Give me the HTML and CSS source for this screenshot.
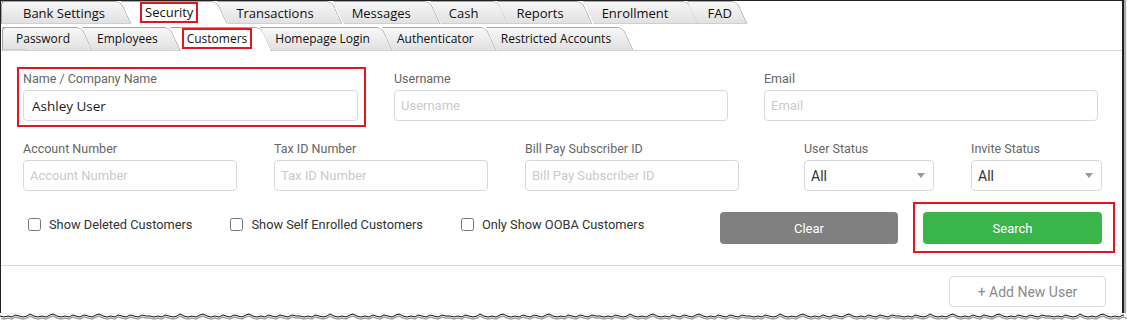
FILE: index.html
```html
<!DOCTYPE html>
<html lang="en">
<head>
    <meta charset="UTF-8">
    <meta name="viewport" content="width=device-width, initial-scale=1.0">
    <title>Security - Customers</title>
    <link rel="stylesheet" href="styles.css">
</head>
<body>
    <div class="frame">
        <!-- Main tabs -->
        <nav class="tabs tabs-main">
            <div class="tab">Bank Settings</div>
            <div class="tab active"><span class="hl">Security</span></div>
            <div class="tab">Transactions</div>
            <div class="tab">Messages</div>
            <div class="tab">Cash</div>
            <div class="tab">Reports</div>
            <div class="tab">Enrollment</div>
            <div class="tab tab-last">FAD</div>
        </nav>

        <!-- Security sub tabs -->
        <nav class="tabs tabs-sub">
            <div class="tab">Password</div>
            <div class="tab">Employees</div>
            <div class="tab active"><span class="hl">Customers</span></div>
            <div class="tab">Homepage Login</div>
            <div class="tab">Authenticator</div>
            <div class="tab">Restricted Accounts</div>
        </nav>

        <form class="search-form">
            <div class="row row-top">
                <div class="field field-hl">
                    <label class="field-label">Name / Company Name</label>
                    <input type="text" class="input input-filled" value="Ashley User">
                </div>
                <div class="field">
                    <label class="field-label">Username</label>
                    <input type="text" class="input" placeholder="Username">
                </div>
                <div class="field">
                    <label class="field-label">Email</label>
                    <input type="text" class="input" placeholder="Email">
                </div>
            </div>

            <div class="row row-mid">
                <div class="field">
                    <label class="field-label">Account Number</label>
                    <input type="text" class="input" placeholder="Account Number">
                </div>
                <div class="field">
                    <label class="field-label">Tax ID Number</label>
                    <input type="text" class="input" placeholder="Tax ID Number">
                </div>
                <div class="field">
                    <label class="field-label">Bill Pay Subscriber ID</label>
                    <input type="text" class="input" placeholder="Bill Pay Subscriber ID">
                </div>
                <div class="field field-status">
                    <label class="field-label">User Status</label>
                    <div class="select-wrap">
                        <select class="select"><option>All</option></select>
                        <span class="caret"></span>
                    </div>
                </div>
                <div class="field">
                    <label class="field-label">Invite Status</label>
                    <div class="select-wrap">
                        <select class="select"><option>All</option></select>
                        <span class="caret"></span>
                    </div>
                </div>
            </div>

            <div class="row row-actions">
                <div class="checks">
                    <label class="check"><input type="checkbox"><span>Show Deleted Customers</span></label>
                    <label class="check"><input type="checkbox"><span>Show Self Enrolled Customers</span></label>
                    <label class="check"><input type="checkbox"><span>Only Show OOBA Customers</span></label>
                </div>
                <div class="buttons">
                    <button type="button" class="btn btn-clear">Clear</button>
                    <div class="btn-hl">
                        <button type="button" class="btn btn-search">Search</button>
                    </div>
                </div>
            </div>
        </form>

        <div class="footer">
            <button type="button" class="btn-add">+ Add New User</button>
        </div>
    </div>

    <!-- torn paper edge -->
    <svg class="tear" width="1127" height="10" viewBox="0 0 1127 10">
        <defs>
            <pattern id="tearShadow" width="150" height="10" patternUnits="userSpaceOnUse">
                <path d="M0 6 L4 7 L8 6 L12 7 L15 5 L19 6 L23 7 L27 6 L30 4 L34 6 L38 7 L42 6 L46 7 L50 5 L53 4 L57 6 L61 7 L65 6 L69 7 L73 5 L76 6 L80 7 L84 5 L88 6 L92 7 L96 5 L99 4 L103 6 L107 7 L111 6 L115 7 L118 5 L122 6 L126 7 L130 5 L134 6 L138 7 L142 5 L146 6 L150 6" fill="none" stroke="#a0a0a0" stroke-width="1.5"/>
            </pattern>
            <pattern id="tearLine" width="150" height="10" patternUnits="userSpaceOnUse">
                <path d="M0 4 L4 5 L8 4 L12 5 L15 3 L19 4 L23 5 L27 4 L30 2 L34 4 L38 5 L42 4 L46 5 L50 3 L53 2 L57 4 L61 5 L65 4 L69 5 L73 3 L76 4 L80 5 L84 3 L88 4 L92 5 L96 3 L99 2 L103 4 L107 5 L111 4 L115 5 L118 3 L122 4 L126 5 L130 3 L134 4 L138 5 L142 3 L146 4 L150 4" fill="none" stroke="#111" stroke-width="1"/>
            </pattern>
        </defs>
        <rect x="1" y="0" width="1126" height="10" fill="url(#tearShadow)"/>
        <rect x="0" y="0" width="1124" height="10" fill="url(#tearLine)"/>
    </svg>
</body>
</html>
```

FILE: styles.css
```css
* {
    margin: 0;
    padding: 0;
    box-sizing: border-box;
}

body {
    font-family: Roboto, Arial, sans-serif;
    background: #fff;
    width: 1127px;
    height: 322px;
    overflow: hidden;
}

/* Window frame */
.frame {
    width: 1124px;
    height: 313px;
    border-top: 1px solid #222;
    border-left: 1px solid #222;
    border-right: 2px solid #222;
    box-shadow: 2px 0 1px #aaa;
    overflow: hidden;
    background: #fff;
}

/* Tabs */
.tabs {
    display: flex;
    height: 23px;
}

.tab {
    position: relative;
    z-index: 0;
    display: flex;
    align-items: center;
    justify-content: center;
    padding: 0 20px;
    font-family: "Open Sans", sans-serif;
    color: #111;
    white-space: nowrap;
}

.tab::before {
    content: '';
    position: absolute;
    top: 0;
    left: 0;
    right: 0;
    bottom: 0;
    z-index: -1;
    background: linear-gradient(#f7f7f7, #e1e1e1);
    border: 1px solid #a4a4a4;
    border-left: none;
    border-bottom-color: #cfcfcf;
    border-radius: 0 6px 0 0;
    transform: skewX(25deg);
    transform-origin: top left;
}

.tab:first-child::after {
    content: '';
    position: absolute;
    top: 0;
    left: 0;
    bottom: 0;
    width: 24px;
    z-index: -1;
    background: linear-gradient(#f7f7f7, #e1e1e1);
    border: 1px solid #a4a4a4;
    border-right: none;
    border-bottom-color: #cfcfcf;
    border-radius: 4px 0 0 0;
}

.tab.active::before {
    background: #fff;
    border-bottom: none;
}

.tabs-main .tab {
    font-size: 13px;
    padding: 0 19px;
}

.tabs-main .tab:first-child {
    padding: 0 16px 0 22px;
}

.tabs-main .tab-last {
    padding: 0 6px 0 20px;
}

.tabs-sub {
    margin-top: 3px;
    border-bottom: 1px solid #d4d4d4;
    height: 24px;
}

.tabs-sub .tab {
    font-size: 12px;
    padding: 0 12px 0 15px;
    height: 23px;
}

.tabs-sub .tab:first-child {
    margin-left: 1px;
    padding-left: 14px;
}

.tabs-sub .tab.active {
    padding: 0 8px 0 12px;
}

.tabs-sub .tab::before {
    border-bottom: none;
}

.tabs-sub .tab.active::before {
    bottom: -1px;
}

.hl {
    border: 2px solid #e8141b;
    padding: 0 3px;
    line-height: 17px;
}

/* Search form */
.search-form {
    padding: 20px 20px 21px 22px;
}

.row {
    display: grid;
}

.row-top {
    grid-template-columns: 335px 334px 334px;
    column-gap: 36px;
}

.row-mid {
    grid-template-columns: 214px 214px 214px 158px 131px;
    column-gap: 37px;
    margin-top: 20px;
}

.field {
    display: flex;
    flex-direction: column;
    gap: 4px;
    position: relative;
}

.field-hl::after {
    content: '';
    position: absolute;
    top: -4px;
    left: -6px;
    right: -8px;
    bottom: -6px;
    border: 2px solid #e8141b;
    pointer-events: none;
}

.field-status {
    padding-left: 28px;
}

.field-label {
    font-size: 12.5px;
    line-height: 15px;
    color: #666;
}

.input {
    height: 31px;
    border: 1px solid #d9d9d9;
    border-radius: 4px;
    padding: 0 6px;
    font-family: Roboto, Arial, sans-serif;
    font-size: 13px;
    color: #222;
    outline: none;
}

.input::placeholder {
    color: #cbcbcb;
}

.input-filled {
    font-family: "Open Sans", sans-serif;
    font-size: 13.5px;
    padding-left: 8px;
    color: #1a1a1a;
}

.select-wrap {
    position: relative;
}

.select {
    appearance: none;
    width: 100%;
    height: 31px;
    border: 1px solid #d9d9d9;
    border-radius: 4px;
    padding: 0 6px;
    background: #fff;
    font-family: Roboto, Arial, sans-serif;
    font-size: 14px;
    color: #333;
    outline: none;
}

.caret {
    position: absolute;
    right: 9px;
    top: 13px;
    border-left: 4.5px solid transparent;
    border-right: 4.5px solid transparent;
    border-top: 5px solid #999;
}

/* Checkboxes and buttons */
.row-actions {
    display: flex;
    justify-content: space-between;
    align-items: flex-start;
    margin-top: 21px;
}

.checks {
    display: flex;
    gap: 38px;
    padding: 5px 0 0 5px;
}

.check {
    display: flex;
    align-items: center;
    gap: 8px;
    font-size: 12.8px;
    line-height: 15px;
    color: #333;
}

.check input {
    width: 13px;
    height: 13px;
    margin: 0;
}

.buttons {
    display: flex;
    gap: 25px;
}

.btn {
    height: 32px;
    border: none;
    border-radius: 4px;
    color: #fff;
    font-family: Roboto, Arial, sans-serif;
    font-size: 13px;
    cursor: pointer;
}

.btn-clear {
    width: 178px;
    background: #808080;
}

.btn-hl {
    position: relative;
}

.btn-hl::after {
    content: '';
    position: absolute;
    top: -10px;
    left: -10px;
    right: -13px;
    bottom: -9px;
    border: 2px solid #e8141b;
    pointer-events: none;
}

.btn-search {
    width: 179px;
    background: #39b54a;
}

/* Footer */
.footer {
    display: flex;
    justify-content: flex-end;
    border-top: 1px solid #d9d9d9;
    padding: 10px 16px 0;
}

.btn-add {
    width: 157px;
    height: 31px;
    background: #fff;
    border: 1px solid #dcdcdc;
    border-radius: 4px;
    font-family: Roboto, Arial, sans-serif;
    font-size: 14px;
    color: #8a8a8a;
}

.tear {
    display: block;
    margin-top: -1px;
}
```
